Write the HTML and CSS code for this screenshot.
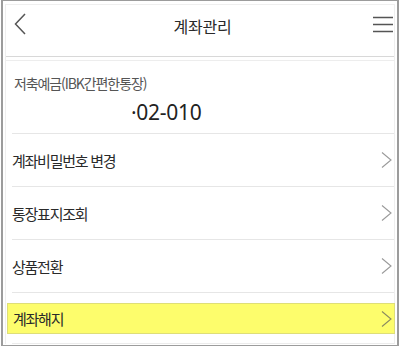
FILE: index.html
```html
<!DOCTYPE html>
<html lang="ko">
<head>
<meta charset="utf-8">
<title>계좌관리</title>
<link rel="stylesheet" href="styles.css">
</head>
<body>
<div class="frame">
  <div class="screen">
    <header class="header">
      <svg class="back" width="12" height="22" viewBox="0 0 12 22"><path d="M11 1 L1.5 11 L11 21" fill="none" stroke="#555" stroke-width="1.5"/></svg>
      <h1 class="title">계좌관리</h1>
      <svg class="menu" width="20" height="17" viewBox="0 0 20 17"><path d="M0 1.5 H20 M0 8.5 H20 M0 15.5 H20" fill="none" stroke="#555" stroke-width="1.5"/></svg>
    </header>
    <section class="card">
      <div class="acct-name">저축예금(IBK간편한통장)</div>
      <div class="acct-no">·02-010</div>
    </section>
    <ul class="menu-list">
      <li class="row"><span>계좌비밀번호 변경</span><svg class="chev" width="11" height="16" viewBox="0 0 11 16"><path d="M1 0.5 L10 8 L1 15.5" fill="none" stroke="#9a9a9a" stroke-width="1.1"/></svg></li>
      <li class="row"><span>통장표지조회</span><svg class="chev" width="11" height="16" viewBox="0 0 11 16"><path d="M1 0.5 L10 8 L1 15.5" fill="none" stroke="#9a9a9a" stroke-width="1.1"/></svg></li>
      <li class="row"><span>상품전환</span><svg class="chev" width="11" height="16" viewBox="0 0 11 16"><path d="M1 0.5 L10 8 L1 15.5" fill="none" stroke="#9a9a9a" stroke-width="1.1"/></svg></li>
      <li class="row row-last"><div class="highlight"><span>계좌해지</span><svg class="chev" width="11" height="16" viewBox="0 0 11 16"><path d="M1 0.5 L10 8 L1 15.5" fill="none" stroke="#8a8a60" stroke-width="1.1"/></svg></div></li>
    </ul>
  </div>
</div>
</body>
</html>
```

FILE: styles.css
```css
* { box-sizing: border-box; }
html, body { margin: 0; padding: 0; background: #fff; }
body {
  font-family: "Noto Sans CJK KR", "Noto Sans", sans-serif;
  color: #333;
}
.frame {
  margin-left: 1px;
  width: 398px;
  height: 346px;
  border-top: 1px solid #9c9c9c;
  border-left: 2px solid #9c9c9c;
  border-right: 2px solid #9c9c9c;
  border-bottom: 1px solid #9c9c9c;
  overflow: hidden;
}
.screen {
  margin: 3px 2px 0 2px;
  height: 340px;
  border: 1px solid #efefef;
  border-bottom: none;
}
.header {
  height: 52px;
  border-bottom: 1px solid #d8d8d8;
  display: flex;
  align-items: center;
  justify-content: space-between;
  padding: 0 1px 13px 8px;
}
.back { display: block; }
.menu { display: block; }
.title {
  margin: 0;
  font-size: 16px;
  font-weight: 400;
  letter-spacing: -0.2px;
  color: #2a2a2a;
  line-height: 20px;
  padding-top: 3px;
  padding-left: 6px;
}
.card {
  margin-top: 3px;
  border-top: 1px solid #ededed;
  padding: 12px 0 6px 8px;
}
.acct-name {
  font-size: 14px;
  line-height: 20px;
  letter-spacing: -1.1px;
  color: #555;
}
.acct-no {
  margin-top: 4px;
  padding-left: 117px;
  font-family: "Noto Sans", sans-serif;
  font-size: 21px;
  line-height: 30px;
  letter-spacing: -0.3px;
  color: #222;
}
.menu-list {
  list-style: none;
  margin: 0 0 0 6px;
  padding: 0;
}
.row {
  height: 53px;
  border-top: 1px solid #e6e6e6;
  display: flex;
  align-items: center;
  justify-content: space-between;
  padding: 0 2px 0 0;
  font-size: 15px;
  letter-spacing: -1.25px;
  color: #2a2a2a;
}
.row-last {
  height: 52px;
  align-items: flex-start;
  padding: 0;
  border-bottom: 1px solid #ececec;
}
.highlight {
  margin: 10px -1px 0 -5px;
  width: calc(100% + 6px);
  height: 31px;
  background: #fdfd6c;
  border: 1px solid #dede78;
  display: flex;
  align-items: center;
  justify-content: space-between;
  padding: 0 2px 0 5px;
}
.chev { display: block; }
```
